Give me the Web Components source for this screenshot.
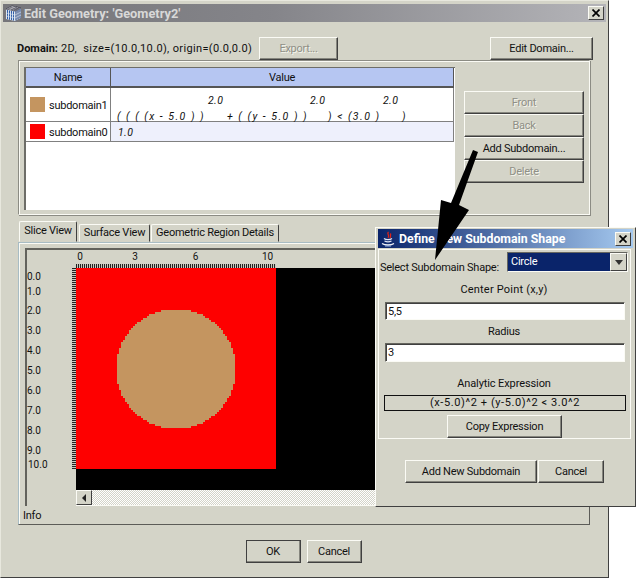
<!DOCTYPE html>
<html>
<head>
<meta charset="utf-8">
<title>Edit Geometry</title>
<style>
html, body { margin: 0; background: #fff; }
body { width: 636px; height: 579px; overflow: hidden; position: relative; font: 11px Roboto, "Liberation Sans", sans-serif; letter-spacing: -.25px; color: #111; }
</style>
</head>
<body>
<edit-geometry></edit-geometry>
<shape-dialog></shape-dialog>
<big-arrow></big-arrow>

<script>
class WinButton extends HTMLElement {
    constructor() {
        super()
        this.attachShadow({mode: 'open'}).innerHTML = `
            <style>
                :host {
                    display: flex;
                    align-items: center;
                    justify-content: center;
                    box-sizing: border-box;
                    height: var(--h, 23px);
                    padding-bottom: 1px;
                    background: #d4d4c8;
                    border: 1px solid;
                    border-color: #fbfbf5 #404040 #404040 #fbfbf5;
                    box-shadow: inset -1px -1px 0 #86867e;
                    white-space: nowrap;
                }
                :host([disabled]) {
                    color: #8f8f86;
                    text-shadow: 1px 1px 0 #f4f4ec;
                }
            </style>
            <slot></slot>`
    }
}
customElements.define('win-button', WinButton)

class CloseBox extends HTMLElement {
    constructor() {
        super()
        this.attachShadow({mode: 'open'}).innerHTML = `
            <style>
                :host {
                    display: block;
                    box-sizing: border-box;
                    width: 16px;
                    height: 14px;
                    background: #d4d4c8;
                    border: 1px solid;
                    border-color: #fbfbf5 #404040 #404040 #fbfbf5;
                }
                svg { display: block; margin: 2px 0 0 3px; }
            </style>
            <svg width="8" height="8" viewBox="0 0 8 8"><path d="M0.5 0.5L7.5 7.5M7.5 0.5L0.5 7.5" stroke="#000" stroke-width="1.7"/></svg>`
    }
}
customElements.define('close-box', CloseBox)

class SubdomainTable extends HTMLElement {
    constructor() {
        super()
        this.attachShadow({mode: 'open'}).innerHTML = `
            <style>
                :host {
                    display: block;
                    box-sizing: border-box;
                    width: 431px;
                    height: 143px;
                    background: #fff;
                    border-top: 1px solid #6d6d68;
                    border-left: 2px solid #6d6d68;
                }
                .grid {
                    display: grid;
                    grid-template-columns: 85px 343px;
                    grid-template-rows: 20px 34px 20px;
                }
                .head {
                    background: #b6c6f2;
                    border-right: 1px solid #555;
                    border-bottom: 2px solid #555;
                    display: flex;
                    align-items: center;
                    justify-content: center;
                    padding-top: 1px;
                }
                .cell {
                    border-right: 1px solid #808080;
                    border-bottom: 1px solid #808080;
                    display: flex;
                    align-items: center;
                    gap: 4px;
                    padding-left: 4px;
                    white-space: nowrap;
                }
                .name { line-height: 17px; }
                .name span:last-child { padding-top: 2px; }
                .alt { background: #eef0fc; padding-top: 2px; }
                .swatch { width: 15px; height: 15px; flex: none; }
                .value { font-style: italic; font-size: 10.5px; letter-spacing: .4px; }
                .math { display: block; padding-left: 0; }
                .sup, .base { display: flex; line-height: 15px; white-space: pre; }
                .sup { padding: 5px 0 0 97px; height: 16px; }
                .base { padding-left: 6px; letter-spacing: 1.5px; height: 12px; }
                .sup span, .base span { flex: none; }
            </style>
            <div class="grid">
                <div class="head">Name</div>
                <div class="head">Value</div>
                <div class="cell name"><span class="swatch" style="background:#c49560"></span><span>subdomain1</span></div>
                <div class="cell value math">
                    <div class="sup"><span style="width:102px">2.0</span><span style="width:73px">2.0</span><span>2.0</span></div>
                    <div class="base"><span style="width:110px">( ( ( (x - 5.0 ) )</span><span style="width:101px">+ ( (y - 5.0 ) )</span><span style="width:74px">) &lt; (3.0 )</span><span>)</span></div>
                </div>
                <div class="cell name"><span class="swatch" style="background:#fe0000"></span><span>subdomain0</span></div>
                <div class="cell value alt">&nbsp;1.0</div>
            </div>`
    }
}
customElements.define('subdomain-table', SubdomainTable)

class SliceView extends HTMLElement {
    constructor() {
        super()
        this.attachShadow({mode: 'open'}).innerHTML = `
            <style>
                :host {
                    display: grid;
                    grid-template-columns: 49px 1fr;
                    grid-template-rows: 18px 222px 16px;
                    width: 560px;
                    height: 258px;
                    box-sizing: border-box;
                    border-top: 2px solid #62625c;
                    border-left: 2px solid #62625c;
                    font-size: 10px;
                    letter-spacing: 0;
                }
                .top { grid-column: 2; }
                .labels { display: flex; height: 13px; padding-top: 1px; }
                .labels span { text-align: center; flex: none; }
                .hticks {
                    height: 4px;
                    width: 200px;
                    background: repeating-linear-gradient(90deg, #222 0 1px, #c8c8bd 1px 2px);
                }
                .left { display: flex; }
                .vlabels { width: 45px; box-sizing: border-box; padding-top: 2px; }
                .vlabels div { line-height: 20px; height: 20px; }
                .vticks {
                    width: 4px;
                    height: 201px;
                    background: repeating-linear-gradient(0deg, #222 0 1px, #c8c8bd 1px 2px);
                }
                svg { display: block; }
                .bar { grid-column: 2; display: flex; background-color: #ecebe3;
                    background-image: repeating-conic-gradient(#d4d4c8 0 25%, #fff 0 50%);
                    background-size: 2px 2px; border-bottom: 1px solid #fbfbf5; box-sizing: border-box; }
                .arrow-btn { width: 16px; height: 15px; box-sizing: border-box; background: #d4d4c8;
                    border: 1px solid; border-color: #fbfbf5 #404040 #404040 #fbfbf5;
                    display: flex; align-items: center; justify-content: center; }
            </style>
            <div></div>
            <div class="top">
                <div class="labels">
                    <span style="width:8px">0</span>
                    <span style="width:55px;padding-left:47px;box-sizing:border-box">3</span>
                    <span style="width:60px;padding-left:53px;box-sizing:border-box">6</span>
                    <span style="width:77px;padding-left:60px;box-sizing:border-box">10</span>
                </div>
                <div class="hticks"></div>
            </div>
            <div class="left">
                <div class="vlabels">
                    <div style="height:13px;line-height:13px">0.0</div>
                    <div style="height:18px;line-height:17px">1.0</div>
                    <div>2.0</div><div>3.0</div><div>4.0</div><div>5.0</div>
                    <div>6.0</div><div>7.0</div><div>8.0</div><div style="height:14px">9.0</div>
                    <div style="padding-left:1px">10.0</div>
                </div>
                <div class="vticks"></div>
            </div>
            <svg width="509" height="222" viewBox="0 0 509 222" shape-rendering="crispEdges"><rect width="509" height="222" fill="#000"/><rect width="200" height="201" fill="#fe0000"/><g id="disc" fill="#c49560"></g></svg>
            <div></div>
            <div class="bar">
                <div class="arrow-btn"><svg width="5" height="8" viewBox="0 0 5 8"><path d="M4 0V8L0 4Z" fill="#222"/></svg></div>
            </div>`
        // the shape is sampled on the slice grid, 2px a cell
        let rects = ''
        for (let j = 0; j <= 100; j++) {
            let first = -1, last = -1
            for (let i = 0; i <= 100; i++) {
                const x = i / 10 - 5, y = j / 10 - 5
                if (x * x + y * y < 8.999) {
                    if (first < 0) first = i
                    last = i
                }
            }
            if (first >= 0) rects += `<rect x="${first * 2 - 1}" y="${j * 2}" width="${(last - first + 1) * 2}" height="2"/>`
        }
        this.shadowRoot.getElementById('disc').innerHTML = rects
    }
}
customElements.define('slice-view', SliceView)

class EditGeometry extends HTMLElement {
    constructor() {
        super()
        this.attachShadow({mode: 'open'}).innerHTML = `
            <style>
                :host {
                    display: block;
                    box-sizing: border-box;
                    width: 609px;
                    height: 578px;
                    background: #d4d4c8;
                    border: 1px solid;
                    border-color: #e8e8de #404040 #404040 #e8e8de;
                    padding: 3px 2px 0 2px;
                }
                .title {
                    height: 18px;
                    background: linear-gradient(90deg, #76767a 0, #85858a 45%, #b4b4b8 100%);
                    color: #d8d8d8;
                    font-weight: 700;
                    font-size: 12.8px;
                    letter-spacing: 0;
                    display: flex;
                    align-items: center;
                    gap: 2px;
                    padding: 0 2px 0 2px;
                }
                .title close-box { margin-left: auto; }
                .domain {
                    display: flex;
                    align-items: center;
                    height: 23px;
                    margin: 15px 13px 0 14px;
                }
                .domain .text { width: 242px; white-space: nowrap; flex: none; letter-spacing: .35px; }
                .domain .text b { letter-spacing: 0; }
                .domain .export { width: 79px; }
                .domain .edit { width: 103px; margin-left: auto; }
                .group {
                    box-sizing: border-box;
                    width: 572px;
                    height: 155px;
                    margin-left: 15px;
                    border: 1px solid;
                    border-color: #8c8c84 #fbfbf5 #fbfbf5 #8c8c84;
                    box-shadow: 1px 1px 0 #8c8c84, inset 1px 1px 0 #fbfbf5;
                    padding: 6px 0 0 5px;
                    display: flex;
                }
                .side {
                    width: 120px;
                    margin: 24px 0 0 9px;
                    --h: 23px;
                }
                .tabs {
                    display: flex;
                    margin: 6px 0 0 16px;
                    height: 21px;
                    align-items: flex-end;
                    gap: 1px;
                }
                .tab {
                    box-sizing: border-box;
                    height: 18px;
                    border: 1px solid;
                    border-color: #fbfbf5 #404040 transparent #fbfbf5;
                    border-radius: 2px 2px 0 0;
                    display: flex;
                    align-items: center;
                    justify-content: center;
                    padding-bottom: 1px;
                    white-space: nowrap;
                }
                .tab.on { height: 21px; margin-right: 1px; padding-bottom: 3px; }
                .panel {
                    box-sizing: border-box;
                    width: 572px;
                    height: 283px;
                    margin-left: 15px;
                    border: 1px solid;
                    border-color: #a8bcc4 #5c5c58 #5c5c58 #a8bcc4;
                    box-shadow: inset 1px 1px 0 #fbfbf5;
                    padding: 5px 0 0 6px;
                }
                .info { height: 18px; line-height: 18px; margin: 1px 0 0 -2px; }
                .footer {
                    display: flex;
                    justify-content: center;
                    gap: 6px;
                    margin: 15px 0 0 0;
                    padding-right: 6px;
                    box-sizing: border-box;
                    width: 607px;
                }
                .footer win-button { width: 55px; }
                .footer .ok { outline: 1px solid #404040; outline-offset: -1px; }
            </style>
            <div class="title">
                <svg width="17" height="17" viewBox="0 0 17 17"><path d="M1 4L7 1L16 3V13L10 16L1 14Z" fill="#e8eef4"/><path d="M1 4L7 1L16 3L10 6Z" fill="#f4f4f4" stroke="#2a2a3a" stroke-width=".7"/><path d="M3 3.2L12 5M5 2.2L14 4M6 5L12 2M9 5.6L14.4 2.6" stroke="#2a2a3a" stroke-width=".6" fill="none"/><path d="M2.5 5V14.3M4.5 5.5V14.7M6.5 6V15.1M8.5 6.2V15.5" stroke="#2f5ea8" stroke-width="1.1"/><path d="M11 6V15.5M13 5V14.5M15 4V13.5" stroke="#1c3c78" stroke-width="1.1"/><path d="M1 8L10 10L16 7M1 11L10 13L16 10" stroke="#dfe8f2" stroke-width=".6" fill="none"/></svg>
                Edit Geometry: 'Geometry2'
                <close-box></close-box>
            </div>
            <div class="domain">
                <span class="text"><b>Domain:</b> 2D,&nbsp; size=(10.0,10.0), origin=(0.0,0.0)</span>
                <win-button class="export" disabled>Export...</win-button>
                <win-button class="edit">Edit Domain...</win-button>
            </div>
            <div class="group">
                <subdomain-table></subdomain-table>
                <div class="side">
                    <win-button disabled>Front</win-button>
                    <win-button disabled>Back</win-button>
                    <win-button>Add Subdomain...</win-button>
                    <win-button disabled>Delete</win-button>
                </div>
            </div>
            <div class="tabs">
                <div class="tab on" style="width:58px">Slice View</div>
                <div class="tab" style="width:71px">Surface View</div>
                <div class="tab" style="width:128px">Geometric Region Details</div>
            </div>
            <div class="panel">
                <slice-view></slice-view>
                <div class="info">Info</div>
            </div>
            <div class="footer">
                <win-button class="ok">OK</win-button>
                <win-button>Cancel</win-button>
            </div>`
    }
}
customElements.define('edit-geometry', EditGeometry)

class ShapeDialog extends HTMLElement {
    constructor() {
        super()
        this.attachShadow({mode: 'open'}).innerHTML = `
            <style>
                :host {
                    position: absolute;
                    left: 375px;
                    top: 227px;
                    width: 261px;
                    height: 280px;
                    box-sizing: border-box;
                    background: #d4d4c8;
                    border: 1px solid;
                    border-color: #fbfbf5 #404040 #404040 #fbfbf5;
                    padding: 1px 2px 0 2px;
                }
                .title {
                    height: 19px;
                    background: linear-gradient(90deg, #0a246a, #a6caf0);
                    color: #fff;
                    font-weight: 700;
                    font-size: 12.3px;
                    letter-spacing: 0;
                    display: flex;
                    align-items: center;
                    gap: 4px;
                    padding: 0 2px 0 3px;
                    white-space: nowrap;
                }
                .title close-box { margin-left: auto; }
                .group {
                    box-sizing: border-box;
                    width: 253px;
                    height: 190px;
                    margin-top: 1px;
                    border: 1px solid #fbfbf5;
                    padding: 2px 2px 0 1px;
                    display: flex;
                    flex-direction: column;
                }
                .shape { display: flex; justify-content: space-between; align-items: flex-end; height: 22px; white-space: nowrap; }
                .shape span { line-height: 13px; }
                .combo {
                    box-sizing: border-box;
                    width: 121px;
                    height: 20px;
                    align-self: flex-start;
                    border: 1px solid;
                    border-color: #66665f #fbfbf5 #fbfbf5 #66665f;
                    background: #0a246a;
                    color: #fff;
                    display: flex;
                    justify-content: space-between;
                    align-items: stretch;
                    padding-left: 3px;
                    line-height: 18px;
                }
                .combo i {
                    width: 17px;
                    background: #d4d4c8;
                    border: 1px solid;
                    border-color: #fbfbf5 #404040 #404040 #fbfbf5;
                    box-sizing: border-box;
                    display: flex;
                    align-items: center;
                    justify-content: center;
                }
                .label { text-align: center; height: 16px; line-height: 16px; }
                .field {
                    box-sizing: border-box;
                    width: 240px;
                    height: 19px;
                    margin-left: 5px;
                    background: #fff;
                    border: 1px solid;
                    border-color: #66665f #fbfbf5 #fbfbf5 #66665f;
                    box-shadow: inset 1px 1px 0 #404040;
                    padding-left: 2px;
                    line-height: 17px;
                }
                .expr {
                    box-sizing: border-box;
                    width: 242px;
                    height: 16px;
                    margin: 3px 0 4px 4px;
                    border: 1px solid #111;
                    text-align: center;
                    line-height: 14px;
                    white-space: nowrap;
                    letter-spacing: .6px;
                }
                .copy { width: 115px; margin-left: 67px; }
                .actions { display: flex; margin: 21px 0 0 27px; gap: 1px; }
                .actions .add { width: 132px; }
                .actions .cancel { width: 66px; }
            </style>
            <div class="title">
                <svg width="14" height="16" viewBox="0 0 14 16"><path d="M7.5 1C5 3 9.5 4 7 7M10 2.5C8.5 4 10.5 5 9 7" stroke="#e02418" stroke-width="1.3" fill="none"/><path d="M3 7.5C5 9 9 9 11 7.5M3.5 10C5.5 11 8.5 11 10.5 10" stroke="#dfe6f6" stroke-width="1.2" fill="none"/><path d="M1 12.5C4 14.5 10 14.5 13 12.5" stroke="#f2f4fa" stroke-width="1.3" fill="none"/><path d="M4 15H10" stroke="#9fb8e8" stroke-width="1"/></svg>
                Define New Subdomain Shape
                <close-box></close-box>
            </div>
            <div class="group">
                <div class="shape">
                    <span>Select Subdomain Shape:</span>
                    <div class="combo">Circle<i><svg width="8" height="5" viewBox="0 0 8 5"><path d="M0 0H8L4 5Z" fill="#333"/></svg></i></div>
                </div>
                <div class="label" style="margin-top:8px;letter-spacing:.2px">Center Point (x,y)</div>
                <div class="field" style="margin-top:4px;height:18px">5,5</div>
                <div class="label" style="margin-top:4px">Radius</div>
                <div class="field" style="margin-top:3px">3</div>
                <div class="label" style="margin-top:14px;letter-spacing:-.1px">Analytic Expression</div>
                <div class="expr">(x-5.0)^2 + (y-5.0)^2 &lt; 3.0^2</div>
                <win-button class="copy">Copy Expression</win-button>
            </div>
            <div class="actions">
                <win-button class="add">Add New Subdomain</win-button>
                <win-button class="cancel">Cancel</win-button>
            </div>`
    }
}
customElements.define('shape-dialog', ShapeDialog)

class BigArrow extends HTMLElement {
    constructor() {
        super()
        this.attachShadow({mode: 'open'}).innerHTML = `
            <style>
                :host { position: absolute; left: 0; top: 0; pointer-events: none; }
                svg { display: block; }
            </style>
            <svg width="636" height="579" viewBox="0 0 636 579"><path d="M473 150L478 152L459 205L469 210L435 260L441 200L451 203Z" fill="#000"/></svg>`
    }
}
customElements.define('big-arrow', BigArrow)
</script>
</body>
</html>
